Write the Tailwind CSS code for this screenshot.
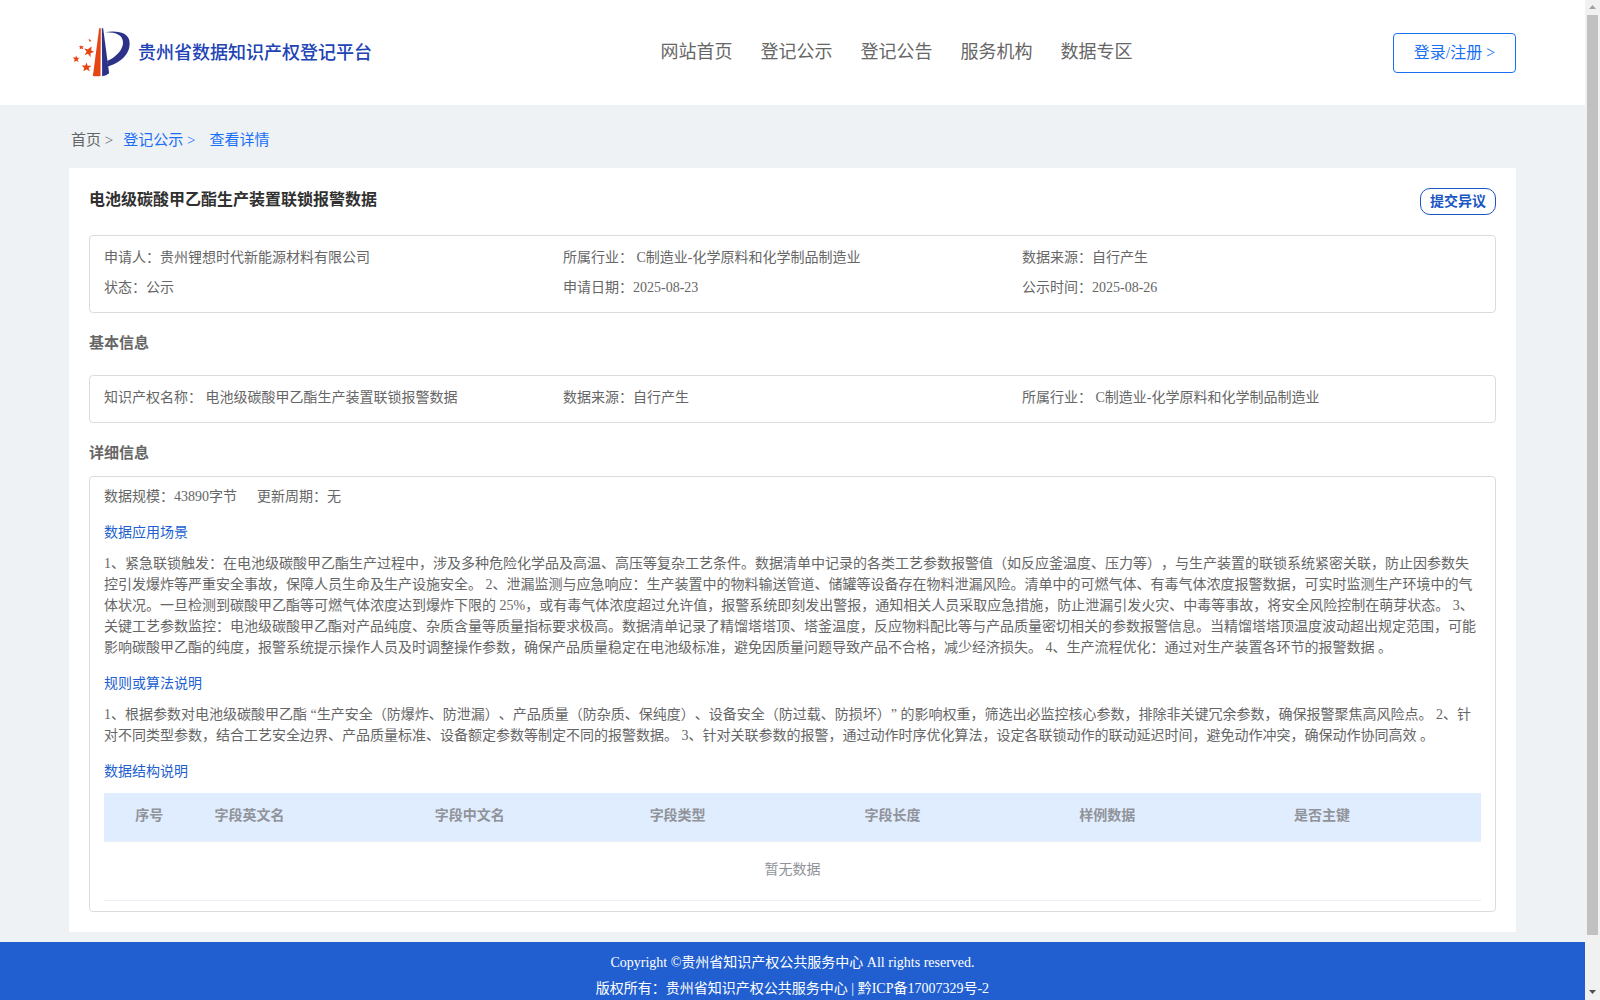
<!DOCTYPE html>
<html lang="zh-CN">
<head>
<meta charset="utf-8">
<meta name="viewport" content="width=device-width, initial-scale=1">
<title>贵州省数据知识产权登记平台</title>
<script src="https://cdn.jsdelivr.net/npm/@tailwindcss/browser@4"></script>
</head>
<body class="flex h-screen overflow-hidden bg-[#eef2f5] font-['Liberation_Serif','Noto_Sans_CJK_SC',serif] text-sm text-[#666] [text-spacing-trim:space-all]">
<div class="h-screen min-w-0 flex-1 overflow-hidden">
  <header class="flex h-[105px] items-center justify-between bg-white px-[69px]">
    <a href="#" class="flex w-[331px] items-center gap-[7px] pl-[3px] text-lg font-medium text-[#2143b5]">
      <svg class="h-[49px] w-[59px] shrink-0" viewBox="36 56 176 148" aria-hidden="true">
        <path d="M117 57h5l-1 144q-12 2-23 0z" fill="#e64514"/>
        <path d="M125 57h4l18 136q-8 7-21 9z" fill="#2b3287"/>
        <path d="M134 69c40-7 76 2 75 34 0 37-34 60-65 69l-3-16c26-12 47-33 48-55 1-25-24-33-55-32z" fill="#2b3287"/>
        <g fill="#e64514">
          <path d="M94 112l-1 12 9 4-11 4 0 12-8-10-10 4 6-11-7-9 11 2z"/>
          <path d="M79 160l3 10 12 0-9 7 4 10-10-6-10 6 3-10-8-8 11 0z"/>
          <path d="M48 139l2 7 8 0-6 5 3 8-7-4-7 4 2-8-6-6 8 0z"/>
          <path d="M61 107l3 4 6-1-3 5 2 5-6-2-5 2 1-5-3-4 5 0z"/>
          <path d="M89 89l1 3 4 0-3 2 1 4-3-2-3 1 1-3-3-3 4 0z"/>
        </g>
      </svg>
      <span>贵州省数据知识产权登记平台</span>
    </a>
    <nav class="flex gap-7 pb-[2px] text-lg">
      <a href="#">网站首页</a>
      <a href="#">登记公示</a>
      <a href="#">登记公告</a>
      <a href="#">服务机构</a>
      <a href="#">数据专区</a>
    </nav>
    <button type="button" class="h-10 w-[123px] rounded border border-[#1a6ff5] text-base text-[#1a6ff5]">登录/注册 &gt;</button>
  </header>

  <main class="px-[69px] pb-[10px]">
    <div class="flex h-[63px] items-center pt-[6px] pl-[2px] text-[15px] leading-6 text-[#1a6ff5]">
      <a href="#" class="mr-[10px] text-[#666]">首页 &gt;</a>
      <a href="#" class="mr-[14px]">登记公示 &gt;</a>
      <a href="#">查看详情</a>
    </div>

    <div class="bg-white p-5">
      <div class="flex h-[47px] items-start justify-between">
        <h1 class="text-base font-bold text-[#303030]">电池级碳酸甲乙酯生产装置联锁报警数据</h1>
        <button type="button" class="h-[27px] w-[76px] rounded-[10px] border border-[#1a56c4] font-bold text-[#1a56c4]">提交异议</button>
      </div>

      <section class="grid grid-cols-3 rounded border border-[#dcdcdc] px-[14px] pt-[7px] pb-[9px] leading-[30px]">
        <p>申请人：贵州锂想时代新能源材料有限公司</p>
        <p>所属行业： C制造业-化学原料和化学制品制造业</p>
        <p>数据来源：自行产生</p>
        <p>状态：公示</p>
        <p>申请日期：2025-08-23</p>
        <p>公示时间：2025-08-26</p>
      </section>

      <h2 class="pt-[18px] pb-5 text-[15px] leading-6 font-bold">基本信息</h2>
      <section class="grid grid-cols-3 rounded border border-[#dcdcdc] px-[14px] pt-[7px] pb-[9px] leading-[30px]">
        <p>知识产权名称： 电池级碳酸甲乙酯生产装置联锁报警数据</p>
        <p>数据来源：自行产生</p>
        <p>所属行业： C制造业-化学原料和化学制品制造业</p>
      </section>

      <h2 class="pt-[18px] pb-[11px] text-[15px] leading-6 font-bold">详细信息</h2>
      <section class="rounded border border-[#dcdcdc] px-[14px] pt-[9px] pb-[10px] leading-[21px]">
        <div class="flex gap-5"><p>数据规模：43890字节</p><p>更新周期：无</p></div>

        <h3 class="pt-[15px] pb-[10px] text-[#215fd0]">数据应用场景</h3>
        <p>1、紧急联锁触发：在电池级碳酸甲乙酯生产过程中，涉及多种危险化学品及高温、高压等复杂工艺条件。数据清单中记录的各类工艺参数报警值（如反应釜温度、压力等），与生产装置的联锁系统紧密关联，防止因参数失控引发爆炸等严重安全事故，保障人员生命及生产设施安全。 2、泄漏监测与应急响应：生产装置中的物料输送管道、储罐等设备存在物料泄漏风险。清单中的可燃气体、有毒气体浓度报警数据，可实时监测生产环境中的气体状况。一旦检测到碳酸甲乙酯等可燃气体浓度达到爆炸下限的 25%，或有毒气体浓度超过允许值，报警系统即刻发出警报，通知相关人员采取应急措施，防止泄漏引发火灾、中毒等事故，将安全风险控制在萌芽状态。 3、关键工艺参数监控：电池级碳酸甲乙酯对产品纯度、杂质含量等质量指标要求极高。数据清单记录了精馏塔塔顶、塔釜温度，反应物料配比等与产品质量密切相关的参数报警信息。当精馏塔塔顶温度波动超出规定范围，可能影响碳酸甲乙酯的纯度，报警系统提示操作人员及时调整操作参数，确保产品质量稳定在电池级标准，避免因质量问题导致产品不合格，减少经济损失。 4、生产流程优化：通过对生产装置各环节的报警数据 。</p>

        <h3 class="pt-[15px] pb-[10px] text-[#215fd0]">规则或算法说明</h3>
        <p>1、根据参数对电池级碳酸甲乙酯 “生产安全（防爆炸、防泄漏）、产品质量（防杂质、保纯度）、设备安全（防过载、防损坏）” 的影响权重，筛选出必监控核心参数，排除非关键冗余参数，确保报警聚焦高风险点。 2、针对不同类型参数，结合工艺安全边界、产品质量标准、设备额定参数等制定不同的报警数据。 3、针对关联参数的报警，通过动作时序优化算法，设定各联锁动作的联动延迟时间，避免动作冲突，确保动作协同高效 。</p>

        <h3 class="pt-[15px] pb-[11px] text-[#215fd0]">数据结构说明</h3>
        <table class="w-full table-fixed border-collapse text-left text-[#909399]">
          <thead class="bg-[#e0edff]">
            <tr class="h-12 border-b border-[#ebeef5]">
              <th class="w-[7.3%] pr-[10px] pb-[2px] text-center">序号</th>
              <th class="w-[16%] px-[10px] pb-[2px]">字段英文名</th>
              <th class="w-[15.6%] px-[10px] pb-[2px]">字段中文名</th>
              <th class="w-[15.6%] px-[10px] pb-[2px]">字段类型</th>
              <th class="w-[15.6%] px-[10px] pb-[2px]">字段长度</th>
              <th class="w-[15.6%] px-[10px] pb-[2px]">样例数据</th>
              <th class="px-[10px] pb-[2px]">是否主键</th>
            </tr>
          </thead>
          <tbody>
            <tr class="h-[59px] border-b border-[#ebeef5]"><td colspan="7" class="pb-[2px] text-center">暂无数据</td></tr>
          </tbody>
        </table>
      </section>
    </div>
  </main>

  <footer class="bg-[#215fd0] py-2 text-center leading-[26px] text-white">
    <p>Copyright ©贵州省知识产权公共服务中心 All rights reserved.</p>
    <p>版权所有：贵州省知识产权公共服务中心 | <a href="#">黔ICP备17007329号-2</a></p>
  </footer>
</div>
<div class="flex h-screen w-[15px] shrink-0 flex-col items-center bg-[#f1f1f1]" aria-hidden="true">
  <svg class="h-[15px] w-[15px] shrink-0" viewBox="0 0 15 15"><path d="M4 9l3.500-4L11 9z" fill="#a3a3a3"/></svg>
  <div class="h-[92%] w-[11px] bg-[#c1c1c1]"></div>
  <svg class="mt-auto h-[15px] w-[15px] shrink-0" viewBox="0 0 15 15"><path d="M4 5l3.500 4L11 5z" fill="#505050"/></svg>
</div>
</body>
</html>
